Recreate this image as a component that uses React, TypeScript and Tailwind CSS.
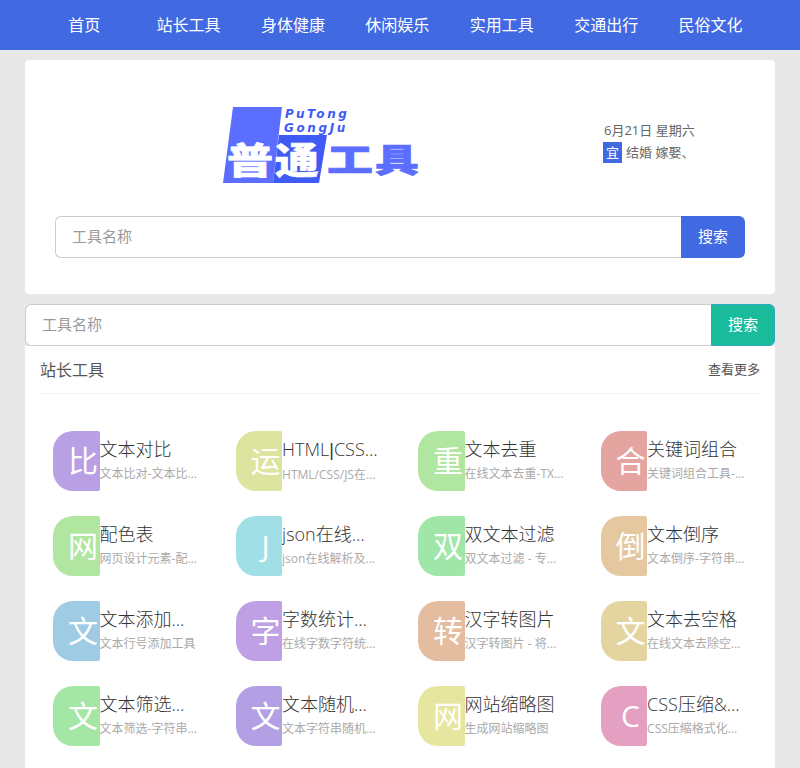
import type { ReactNode } from 'react';

const navItems = ['首页', '站长工具', '身体健康', '休闲娱乐', '实用工具', '交通出行', '民俗文化'];

const pipe = <span className="font-['Liberation_Sans']">|</span>;

const tools: { icon: string; color: string; title: ReactNode; desc: string }[] = [
  { icon: '比', color: 'bg-[#b9a0e4]', title: '文本对比', desc: '文本比对-文本比对工具' },
  { icon: '运', color: 'bg-[#dce4a0]', title: <>HTML{pipe}CSS{pipe}JS运行</>, desc: 'HTML/CSS/JS在线运行工具' },
  { icon: '重', color: 'bg-[#b0e6a0]', title: '文本去重', desc: '在线文本去重-TXT文本去重' },
  { icon: '合', color: 'bg-[#e4a5a0]', title: '关键词组合', desc: '关键词组合工具-关键词' },
  { icon: '网', color: 'bg-[#b0e6a0]', title: '配色表', desc: '网页设计元素-配色表工具' },
  { icon: 'J', color: 'bg-[#a0dfe6]', title: 'json在线解析', desc: 'json在线解析及格式化' },
  { icon: '双', color: 'bg-[#a0e6a8]', title: '双文本过滤', desc: '双文本过滤 - 专业工具' },
  { icon: '倒', color: 'bg-[#e5c8a0]', title: '文本倒序', desc: '文本倒序-字符串倒序' },
  { icon: '文', color: 'bg-[#a0cbe4]', title: '文本添加行号', desc: '文本行号添加工具' },
  { icon: '字', color: 'bg-[#c0a0e4]', title: '字数统计工具', desc: '在线字数字符统计工具' },
  { icon: '转', color: 'bg-[#e4bda0]', title: '汉字转图片', desc: '汉字转图片 - 将汉字转' },
  { icon: '文', color: 'bg-[#e4d5a0]', title: '文本去空格', desc: '在线文本去除空格工具' },
  { icon: '文', color: 'bg-[#a4e6a4]', title: '文本筛选工具', desc: '文本筛选-字符串筛选' },
  { icon: '文', color: 'bg-[#b3a0e4]', title: '文本随机排序', desc: '文本字符串随机排序工具' },
  { icon: '网', color: 'bg-[#e6e6a0]', title: '网站缩略图', desc: '生成网站缩略图' },
  { icon: 'C', color: 'bg-[#e4a0c0]', title: 'CSS压缩&格式化', desc: 'CSS压缩格式化工具' },
];

function Logo() {
  return (
    <svg width="200" height="78" viewBox="0 0 200 78" className="block">
      <polygon points="11,0 60,0 51,76 1,76" fill="#5c6eff" />
      <polygon points="57,28 105,28 97,76 51,76" fill="#3f5af5" />
      <g fontFamily="'Noto Sans CJK SC', sans-serif" fontWeight="900">
        <text transform="translate(5 67) scale(1 0.78)" fill="#fff" fontSize="46" stroke="#fff" strokeWidth="0.8">普</text>
        <text transform="translate(53 67) scale(0.95 0.78)" fill="#fff" fontSize="46" stroke="#fff" strokeWidth="0.8">通</text>
        <text transform="translate(105 65) scale(1 0.72)" fill="#5c6eff" fontSize="46" stroke="#5c6eff" strokeWidth="1">工</text>
        <text transform="translate(153 65) scale(0.95 0.72)" fill="#5c6eff" fontSize="46" stroke="#5c6eff" strokeWidth="1">具</text>
      </g>
      <g fontFamily="'DejaVu Sans', sans-serif" fontWeight="700" fontStyle="italic" fill="#3f5af5" fontSize="12" letterSpacing="2.6">
        <text x="63" y="11">PuTong</text>
        <text x="62" y="25">GongJu</text>
      </g>
    </svg>
  );
}

function SearchBar({ button }: { button: string }) {
  return (
    <div className="flex h-[42px]">
      <div className="flex-1 flex items-center pl-4 pb-[1px] bg-white border border-[#ccc] border-r-0 rounded-l-md text-[15px] text-[#999]">工具名称</div>
      <button className={`w-[64px] pb-[1px] text-[15px] text-white rounded-r-md ${button}`}>搜索</button>
    </div>
  );
}

export default function App() {
  return (
    <div className="h-screen overflow-hidden bg-[#e8e8e8] font-['Open_Sans','Noto_Sans_CJK_SC',sans-serif]">
      <nav className="h-[50px] bg-[#4169e1] flex px-[32px]">
        {navItems.map((item) => (
          <a key={item} className="w-[104.4px] flex items-center justify-center text-white text-base">{item}</a>
        ))}
      </nav>

      <div className="mx-[25px] mt-[10px]">
        <section className="bg-white rounded-sm h-[234px] px-[30px] pt-[47px]">
          <div className="flex h-[109px]">
            <div className="ml-[167px] w-[383px]"><Logo /></div>
            <div className="mt-[13px] text-[13px] text-[#666]">
              <div className="h-[20px] leading-[20px] -ml-[1px]">6月21日 星期六</div>
              <div className="flex items-center mt-[2px] -ml-[2px]">
                <span className="w-[19px] h-[21px] bg-[#4169e1] text-white flex items-center justify-center">宜</span>
                <span className="ml-[4px]">结婚 嫁娶、</span>
              </div>
            </div>
          </div>
          <SearchBar button="bg-[#4169e1]" />
        </section>

        <div className="mt-[10px]">
          <SearchBar button="bg-[#1abc9c] border border-[#2ea5c0]" />
        </div>

        <section className="bg-white px-[15px] h-[430px]">
          <div className="flex items-center justify-between h-[48px] border-b border-[#f2f2f2]">
            <h2 className="text-base text-[#555]">站长工具</h2>
            <a className="text-[13px] text-[#555]">查看更多</a>
          </div>
          <div className="grid grid-cols-4 w-[730px] gap-y-[25px] pt-[37px]">
            {tools.map((tool, i) => (
              <div key={i} className="flex h-[60px] pl-[13px]">
                <div className={`w-[46.6px] h-[60px] shrink-0 rounded-l-[20px] rounded-r-[2px] text-[30px] leading-[60px] text-white ${tool.color}`}>
                  <span className="block w-[60px] text-center">{tool.icon}</span>
                </div>
                <div className="w-[100px] pt-[3px]">
                  <div className="truncate text-lg font-light leading-[30px] text-[#333]">{tool.title}</div>
                  <div className="truncate text-xs leading-[20px] text-[#aaa]">{tool.desc}</div>
                </div>
              </div>
            ))}
          </div>
        </section>
      </div>
    </div>
  );
}
